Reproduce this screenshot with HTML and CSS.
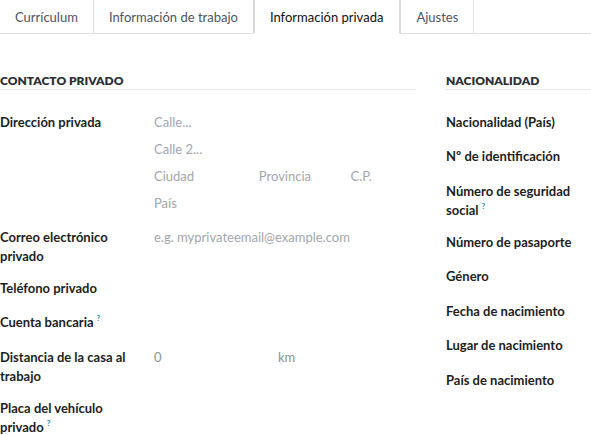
FILE: index.html
```html
<!DOCTYPE html>
<html lang="es">
<head>
<meta charset="utf-8">
<title>Información privada</title>
<link rel="stylesheet" href="styles.css">
</head>
<body>
<div class="tabs">
  <div class="tab">Currículum</div>
  <div class="tab">Información de trabajo</div>
  <div class="tab active">Información privada</div>
  <div class="tab">Ajustes</div>
  <div class="tab-fill"></div>
</div>
<div class="sheet">
  <section class="group left">
    <h3 class="group-title">Contacto privado</h3>
    <div class="row">
      <div class="label">Dirección privada</div>
      <div class="value address">
        <div class="line ph">Calle...</div>
        <div class="line ph">Calle 2...</div>
        <div class="line split">
          <span class="ph city">Ciudad</span>
          <span class="ph state">Provincia</span>
          <span class="ph zip">C.P.</span>
        </div>
        <div class="line ph">País</div>
      </div>
    </div>
    <div class="row">
      <div class="label">Correo electrónico privado</div>
      <div class="value ph">e.g. myprivateemail@example.com</div>
    </div>
    <div class="row">
      <div class="label">Teléfono privado</div>
      <div class="value"></div>
    </div>
    <div class="row">
      <div class="label">Cuenta bancaria<sup class="help">?</sup></div>
      <div class="value"></div>
    </div>
    <div class="row">
      <div class="label">Distancia de la casa al trabajo</div>
      <div class="value distance"><span class="num">0</span><span class="unit">km</span></div>
    </div>
    <div class="row">
      <div class="label">Placa del vehículo privado<sup class="help">?</sup></div>
      <div class="value"></div>
    </div>
  </section>
  <section class="group right">
    <h3 class="group-title">Nacionalidad</h3>
    <div class="row"><div class="label">Nacionalidad (País)</div></div>
    <div class="row"><div class="label">Nº de identificación</div></div>
    <div class="row"><div class="label">Número de seguridad social<sup class="help">?</sup></div></div>
    <div class="row"><div class="label">Número de pasaporte</div></div>
    <div class="row"><div class="label">Género</div></div>
    <div class="row"><div class="label">Fecha de nacimiento</div></div>
    <div class="row"><div class="label">Lugar de nacimiento</div></div>
    <div class="row"><div class="label">País de nacimiento</div></div>
  </section>
</div>
</body>
</html>
```
FILE: styles.css
```css
html, body {
  margin: 0;
  padding: 0;
  background: #ffffff;
  overflow: hidden;
}
body {
  font-family: "Lato", "Open Sans", sans-serif;
  font-size: 13px;
  color: #1f2328;
  width: 591px;
  height: 435px;
}
.tabs {
  display: flex;
  height: 34px;
}
.tab {
  padding: 0 15px;
  line-height: 34px;
  color: #4d5461;
  border-right: 1px solid #e2e2e2;
  border-bottom: 1px solid #e2e2e2;
  box-sizing: border-box;
  white-space: nowrap;
}
.tab.active {
  color: #111111;
  border-left: 2px solid #dcd6de;
  border-right: 2px solid #dcd6de;
  border-bottom: 1px solid #ffffff;
  margin-left: -1px;
  padding: 0 16px 0 15px;
}
.tab-fill {
  flex: 1;
  border-bottom: 1px solid #e2e2e2;
}
.sheet {
  display: flex;
  gap: 30px;
  padding-top: 39px;
}
.group.left {
  width: 416px;
  flex: none;
}
.group.right {
  flex: 1;
}
.group-title {
  margin: 0 0 15px;
  font-size: 12px;
  font-weight: 800;
  text-transform: uppercase;
  line-height: 16px;
  color: #2b2f36;
  border-bottom: 1px solid #e6e6e6;
}
.row {
  display: flex;
  min-height: 34.5px;
}
.label {
  width: 154px;
  flex: none;
  box-sizing: border-box;
  padding: 7.5px 14px 5.5px 0;
  line-height: 19px;
  font-weight: 700;
  color: #1c1e22;
}
.right .label {
  width: 145px;
  padding-right: 6px;
}
.value {
  flex: 1;
  padding-top: 7.5px;
  line-height: 19px;
}
.ph {
  color: #a2a6ab;
}
.value.address {
  padding-top: 4px;
  padding-bottom: 3px;
}
.address .line {
  line-height: 27px;
}
.split {
  display: flex;
}
.city { width: 40%; }
.state { width: 35%; }
.zip { width: 25%; }
.distance {
  display: flex;
  color: #8c9096;
}
.distance .num {
  width: 124px;
}
.help {
  color: #1a8fb5;
  font-size: 8px;
  font-weight: 700;
  line-height: 0;
  margin-left: 3px;
  vertical-align: 6px;
}
```
